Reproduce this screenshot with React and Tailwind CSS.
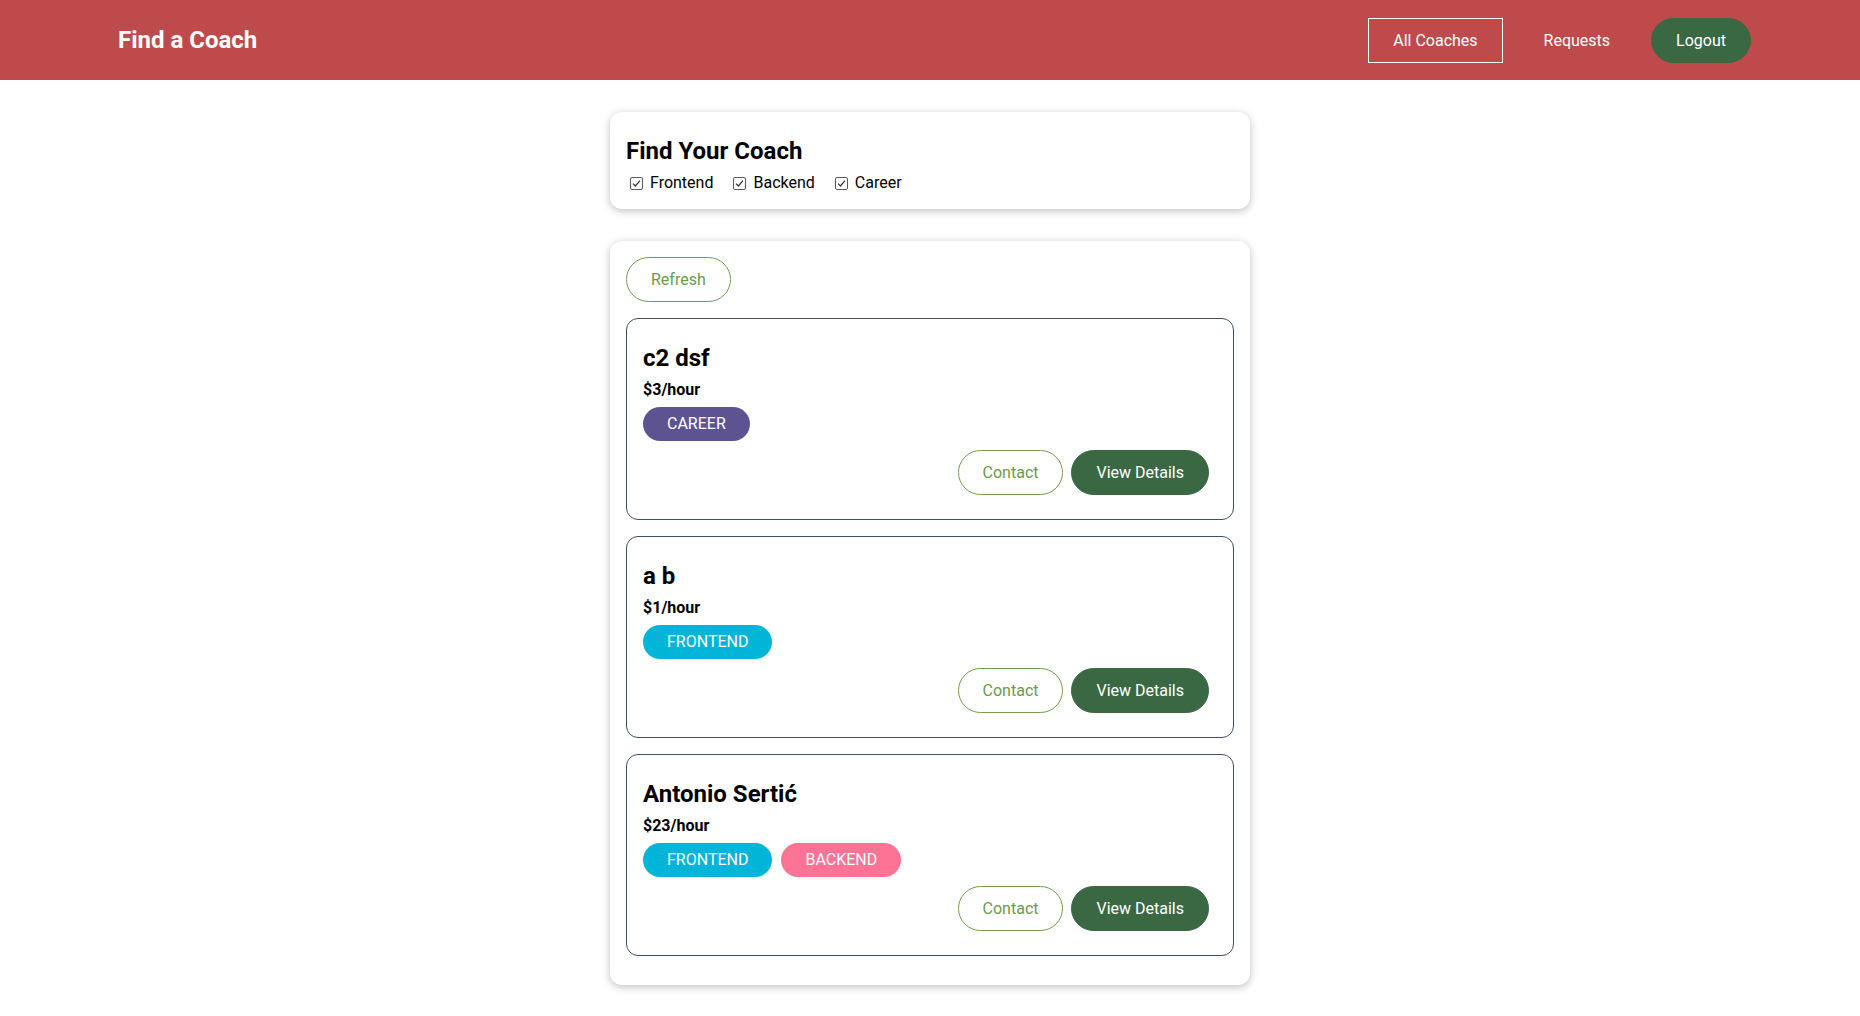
import React from "react";

const coaches = [
  { name: "c2 dsf", rate: 3, areas: ["career"] },
  { name: "a b", rate: 1, areas: ["frontend"] },
  { name: "Antonio Sertić", rate: 23, areas: ["frontend", "backend"] },
];

const badgeClass = {
  career: "bg-[#5e5391]",
  frontend: "bg-[#00b5d8]",
  backend: "bg-[#fd7396]",
};

function Check({ label }) {
  return (
    <div className="flex items-center mr-4">
      <span className="ml-[4px] mr-[3px] w-[13px] h-[13px] border border-[#5a5a5a] rounded-[2px] flex items-center justify-center bg-white">
        <svg width="9" height="9" viewBox="0 0 9 9" fill="none">
          <path d="M1 4.6 L3.4 7 L8 1.6" stroke="#333" strokeWidth="1.2" />
        </svg>
      </span>
      <span className="ml-1 text-base leading-[20px] text-black">{label}</span>
    </div>
  );
}

function CoachCard({ c }) {
  return (
    <li className="border border-[#3e4f62] rounded-xl pt-[17px] px-4 pb-[24px] my-4 last:mb-[13px]">
      <h3 className="mt-2 text-2xl font-bold leading-[28px] text-black">{c.name}</h3>
      <h4 className="mt-2 text-base font-bold leading-[19px] text-black">${c.rate}/hour</h4>
      <div className="mt-2 flex gap-[9px]">
        {c.areas.map((a) => (
          <span
            key={a}
            className={`${badgeClass[a]} text-white uppercase rounded-full px-6 py-2 leading-[18px] text-base`}
          >
            {a}
          </span>
        ))}
      </div>
      <div className="mt-[9px] flex justify-end">
        <button className="mr-2 border border-[#6f9e4f] text-[#6a9a4b] rounded-full px-6 py-3 leading-[19px] text-base bg-white">
          Contact
        </button>
        <button className="mr-2 border border-[#3a6843] bg-[#3a6843] text-white rounded-full px-6 py-3 leading-[19px] text-base">
          View Details
        </button>
      </div>
    </li>
  );
}

export default function App() {
  return (
    <div className="min-h-screen bg-white font-['Roboto',sans-serif]">
      <header className="h-20 bg-[#bf4a4b] flex items-center">
        <nav className="w-[90%] mx-auto flex justify-between items-center">
          <h1 className="pl-[25px] pr-6 text-2xl font-bold text-white leading-[28px]">Find a Coach</h1>
          <ul className="flex items-center gap-4 pr-4">
            <li className="border border-white px-6 py-3 text-white leading-[19px] text-base">All Coaches</li>
            <li className="border border-transparent px-6 py-3 text-white leading-[19px] text-base">Requests</li>
            <li className="bg-[#3a6843] border border-[#3a6843] rounded-full px-6 py-3 text-white leading-[19px] text-base">
              Logout
            </li>
          </ul>
        </nav>
      </header>

      <section className="mt-8 w-[640px] mx-auto rounded-xl bg-white shadow-[0_2px_8px_rgba(0,0,0,0.26)] px-4 pt-[17px] pb-4">
        <h2 className="mt-2 text-2xl font-bold leading-[28px] text-black">Find Your Coach</h2>
        <div className="mt-2 flex items-center">
          <Check label="Frontend" />
          <Check label="Backend" />
          <Check label="Career" />
        </div>
      </section>

      <section className="mt-8 mb-8 w-[640px] mx-auto rounded-xl bg-white shadow-[0_2px_8px_rgba(0,0,0,0.26)] px-4 pt-4 pb-4">
        <div className="flex">
          <button className="border border-[#6f9e4f] text-[#6a9a4b] rounded-full px-6 py-3 leading-[19px] text-base bg-white">
            Refresh
          </button>
        </div>
        <ul>
          {coaches.map((c) => (
            <CoachCard key={c.name} c={c} />
          ))}
        </ul>
      </section>
    </div>
  );
}
